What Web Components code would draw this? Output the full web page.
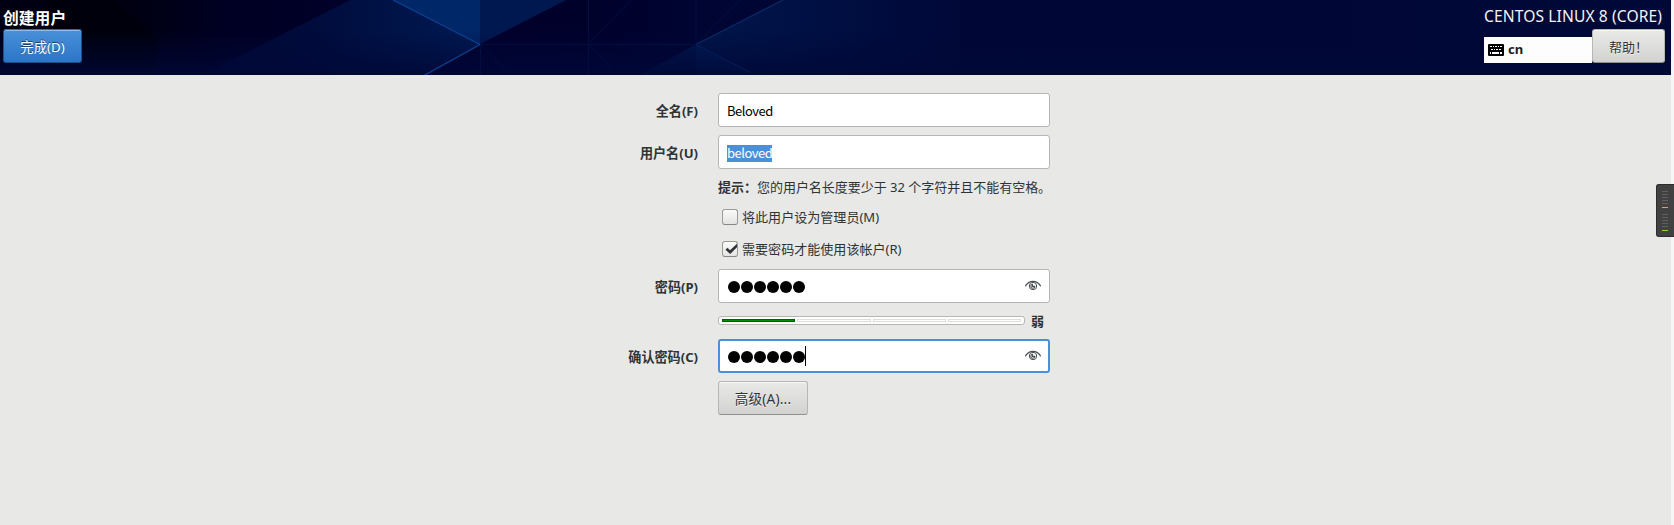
<!DOCTYPE html>
<html lang="zh-CN">
<head>
<meta charset="utf-8">
<title>创建用户</title>
<style>
html, body { margin: 0; height: 100%; }
body { background: #e8e8e6; color: #2e3436; overflow: hidden; font: 13px/20px "Noto Sans", "Noto Sans CJK SC", sans-serif; }
</style>
</head>
<body>
<user-spoke></user-spoke>
<script>
const define = (name, html) => customElements.define(name, class extends HTMLElement {
  constructor() {
    super();
    const t = document.createElement('template');
    t.innerHTML = html;
    this.attachShadow({ mode: 'open' }).append(t.content.cloneNode(true));
  }
});

define('gtk-button', `<style>
:host { display: inline-flex; box-sizing: border-box; height: 34px; padding-top: 1px; align-items: center; justify-content: center; border: 1px solid #b6b6b3; border-bottom-color: #91918c; border-radius: 3px; background: linear-gradient(#e9e9e8, #d2d2d0); box-shadow: inset 0 1px rgba(255,255,255,.6); text-shadow: 0 1px rgba(255,255,255,.75); white-space: nowrap; font-size: 13.3px; }
:host([primary]) { color: #fff; border-color: #2a6cb5 #1c5187 #1c5187; background: linear-gradient(#4a90d9, #2a76c6); box-shadow: inset 0 1px rgba(255,255,255,.4); text-shadow: 0 -1px rgba(0,0,0,.5); }
</style><slot></slot>`);

define('header-art', `<style>:host{display:block;position:absolute;inset:0} svg{display:block}</style>
<svg width="1671" height="75" viewBox="0 0 1671 75">
<defs>
<linearGradient id="base"><stop offset="0" stop-color="#000012"/><stop offset=".08" stop-color="#000012"/><stop offset=".14" stop-color="#000024"/><stop offset=".22" stop-color="#00002a"/><stop offset=".35" stop-color="#00012b"/><stop offset=".45" stop-color="#000634"/><stop offset="1" stop-color="#000838"/></linearGradient>
<linearGradient id="down" x2="0" y2="1"><stop offset=".4" stop-color="#000838" stop-opacity="0"/><stop offset="1" stop-color="#000838" stop-opacity=".85"/></linearGradient>
<linearGradient id="left" gradientUnits="userSpaceOnUse" x1="202" x2="480" y1="0" y2="0"><stop offset="0" stop-color="#000634"/><stop offset=".4" stop-color="#000c3c"/><stop offset="1" stop-color="#001a52"/></linearGradient>
<linearGradient id="right" gradientUnits="userSpaceOnUse" x1="696" x2="960" y1="0" y2="0"><stop offset="0" stop-color="#001548"/><stop offset=".35" stop-color="#001145"/><stop offset="1" stop-color="#000838"/></linearGradient>
</defs>
<path fill="url(#base)" d="M0 0h1671v75H0z"/>
<path fill="#000006" d="M47 0h66l43 38v37H47z" opacity=".5"/>
<path fill="url(#left)" d="M350 0h43l87 44-56 31H202z"/>
<path fill="#002768" d="M393 0h87v44z"/>
<path fill="#001850" d="M480 0h86l-86 44z"/>
<path fill="url(#right)" d="M783 0h177v75H640l56-31z"/>
<path fill="#001c55" d="M696 44v31h54z"/>
<path fill="url(#down)" d="M0 0h1671v75H0z"/>
<g fill="none" stroke="#0b4192" stroke-width="1.3"><path d="M393 0l87 44.500-56 31"/><path stroke="#052a68" d="M783 0l-87 44.500"/><path stroke="#021d56" d="M696 44.500l54 28"/></g>
<g fill="none" stroke="#000f40"><path d="M480 44.500h216M480 44l27 28M480.500 44v31M588.500 0v75M631 0l-43 44 25 26M740 0l-44 44V0"/></g>
</svg>`);

define('keyboard-layout', `<style>
:host { display: flex; box-sizing: border-box; width: 108px; height: 26px; padding: 0 4px; gap: 4px; align-items: center; background: #fdfdfd; font-weight: 700; color: #1c1c1c; line-height: 24px; }
slot { display: block; margin-top: -2px; }
</style><svg width="16" height="12" viewBox="0 0 16 12"><rect width="16" height="12" rx="1"/><path fill="#fff" d="M2 2h2v1H2zM5 2h1v1H5zM7 2h2v1H7zM10 2h1v1h-1zM12 2h2v1h-2zM3 5h2v1H3zM6 5h1v1H6zM8 5h2v1H8zM11 5h2v1h-2zM2 8h1v2H2zM4 8h7v2H4zM12 8h2v2h-2z"/></svg><span><slot></slot></span>`);

define('spoke-header', `<style>
:host { display: flex; position: relative; width: 1671px; height: 75px; box-sizing: border-box; justify-content: space-between; background: #000838; color: #fff; }
.left, .right { position: relative; display: flex; flex-direction: column; }
.left { padding-left: 3px; align-items: flex-start; }
.title { height: 29px; font: 700 15.8px/35px "Noto Sans CJK SC", sans-serif; }
.left gtk-button { width: 79px; }
.right { padding-right: 6px; }
.product { height: 29px; font-size: 15.6px; letter-spacing: .11px; line-height: 32px; color: #f2f2f2; white-space: nowrap; }
.row { display: flex; align-items: flex-end; color: #2e3436; }
.row gtk-button { width: 73px; font-size: 13px; }
</style><header-art></header-art>
<div class="left"><div class="title">创建用户</div><gtk-button primary>完成(D)</gtk-button></div>
<div class="right"><div class="product">CENTOS LINUX 8 (CORE)</div><div class="row"><keyboard-layout>cn</keyboard-layout><gtk-button>帮助！</gtk-button></div></div>`);

define('form-row', `<style>
:host { display: grid; grid-template-columns: 698px 332px; column-gap: 20px; align-items: center; }
.label { text-align: right; font-weight: 700; font-size: 13.1px; padding-top: 1px; }
</style><div class="label"><slot name="label"></slot></div><slot></slot>`);

define('text-entry', `<style>
:host { display: flex; box-sizing: border-box; height: 34px; padding: 2px 8px 0; align-items: center; border: 1px solid #b6b6b3; border-radius: 3px; background: #fff; color: #000; font-family: "Noto Sans CJK SC", sans-serif; letter-spacing: -.5px; }
:host([focused]) { border: 2px solid #4a90d9; padding: 2px 7px 0; }
</style><slot></slot>`);

define('selected-text', `<style>:host{display:block;width:45px;height:17px;line-height:15px;background:#4a90d9;color:#fff}</style><slot></slot>`);

define('password-mask', `<style>
:host { display: flex; flex: 1; align-items: center; justify-content: space-between; }
.dots { display: flex; gap: 1px; align-items: center; height: 20px; padding-left: .6px; }
i { width: 12px; height: 12px; border-radius: 50%; background: #000; }
b { display: none; width: 1px; height: 20px; margin: -2px 0 0 -.6px; background: #000; }
:host([caret]) b { display: block; }
svg { margin-top: -2px; }
</style><div class="dots"><i></i><i></i><i></i><i></i><i></i><i></i><b></b></div>
<svg width="16" height="16" viewBox="0 0 16 16" fill="none" stroke="#4b5052"><path stroke-width="1.200" d="M.3 8.300C2 5 4.700 3.300 8 3.300s6 1.700 7.700 5"/><circle cx="8" cy="8" r="3.700" stroke-width="1"/><path stroke-width="1.100" d="M7.500 6.300a2 2 0 1 0 2.300 2.100H7.500z"/></svg>`);

define('check-option', `<style>
:host { display: flex; padding-left: 4px; gap: 4px; align-items: center; }
.box { box-sizing: border-box; width: 16px; height: 16px; border: 1px solid #9b9b98; border-bottom-color: #858582; border-radius: 3px; background: linear-gradient(#fafafa, #e4e4e3); }
svg { display: none; overflow: visible; }
:host([checked]) svg { display: block; }
span { font-size: 13.05px; }
</style><div class="box"><svg width="14" height="14" viewBox="0 0 14 14"><path d="M2.500 7.800l2-2L7 8.300 14 1.800v3.400L7.200 12z" fill="#2e3436"/></svg></div><span><slot></slot></span>`);

define('strength-bar', `<style>
:host { display: flex; gap: 6px; align-items: center; font-weight: 700; }
.bar { display: flex; box-sizing: border-box; width: 307px; height: 9px; margin-top: -2px; padding: 2px 3px; gap: 2px; border: 1px solid #b6b6b3; border-radius: 3px; background: #fff; }
i { flex: 1; box-sizing: border-box; border: 1px solid #deded9; }
i.on { background: #008a00; border-color: #065c08; }
</style><div class="bar"><i class="on"></i><i></i><i></i><i></i></div><slot></slot>`);

define('level-meter', `<style>
:host { position: absolute; right: 0; top: 184px; width: 18px; height: 53px; box-sizing: border-box; border: 1px solid #2c2c2c; border-right: 0; border-radius: 3px 0 0 3px; background: #414141; }
svg { display: block; }
</style><svg width="17" height="51" viewBox="0 0 17 51"><path fill="#606060" d="M5 6h6v1H5zM5 9h6v1H5zM5 12h6v1H5zM5 15h6v1H5zM5 18h6v1H5zM5 29h6v1H5zM5 32h6v1H5zM5 35h6v1H5zM5 38h6v1H5zM5 41h6v1H5z"/><path fill="#f5a02a" d="M5 22h6v1H5z"/><path fill="#80df30" d="M5 45h6v1H5z"/></svg>`);

define('user-spoke', `<style>
:host { display: block; position: relative; height: 525px; box-sizing: border-box; background: linear-gradient(#f6f6f6,#f6f6f6) 1671px 0 / 3px 100% no-repeat; }
main { display: flex; flex-direction: column; padding-top: 18px; }
.gap { margin-top: 8px; }
.hint { height: 20px; margin-top: 8px; white-space: nowrap; }
.hint div { letter-spacing: -.02px; }
.c1 { height: 20px; margin-top: 10px; } .c2 { height: 20px; margin-top: 12px; } .pw { margin-top: 10px; }
.str { margin-top: 8px; height: 20px; } .again { margin-top: 8px; }
main gtk-button { width: 90px; font-size: 13.6px; letter-spacing: .2px; }
</style><spoke-header></spoke-header>
<main>
<form-row><span slot="label">全名(F)</span><text-entry>Beloved</text-entry></form-row>
<form-row class="gap"><span slot="label">用户名(U)</span><text-entry><selected-text>beloved</selected-text></text-entry></form-row>
<form-row class="hint"><div><b>提示：</b>您的用户名长度要少于 32 个字符并且不能有空格。</div></form-row>
<form-row class="c1"><check-option>将此用户设为管理员(M)</check-option></form-row>
<form-row class="c2"><check-option checked>需要密码才能使用该帐户(R)</check-option></form-row>
<form-row class="pw"><span slot="label">密码(P)</span><text-entry><password-mask></password-mask></text-entry></form-row>
<form-row class="str"><strength-bar>弱</strength-bar></form-row>
<form-row class="again"><span slot="label">确认密码(C)</span><text-entry focused><password-mask caret></password-mask></text-entry></form-row>
<form-row class="gap"><gtk-button>高级(A)...</gtk-button></form-row>
</main>
<level-meter></level-meter>`);
</script>
</body>
</html>
